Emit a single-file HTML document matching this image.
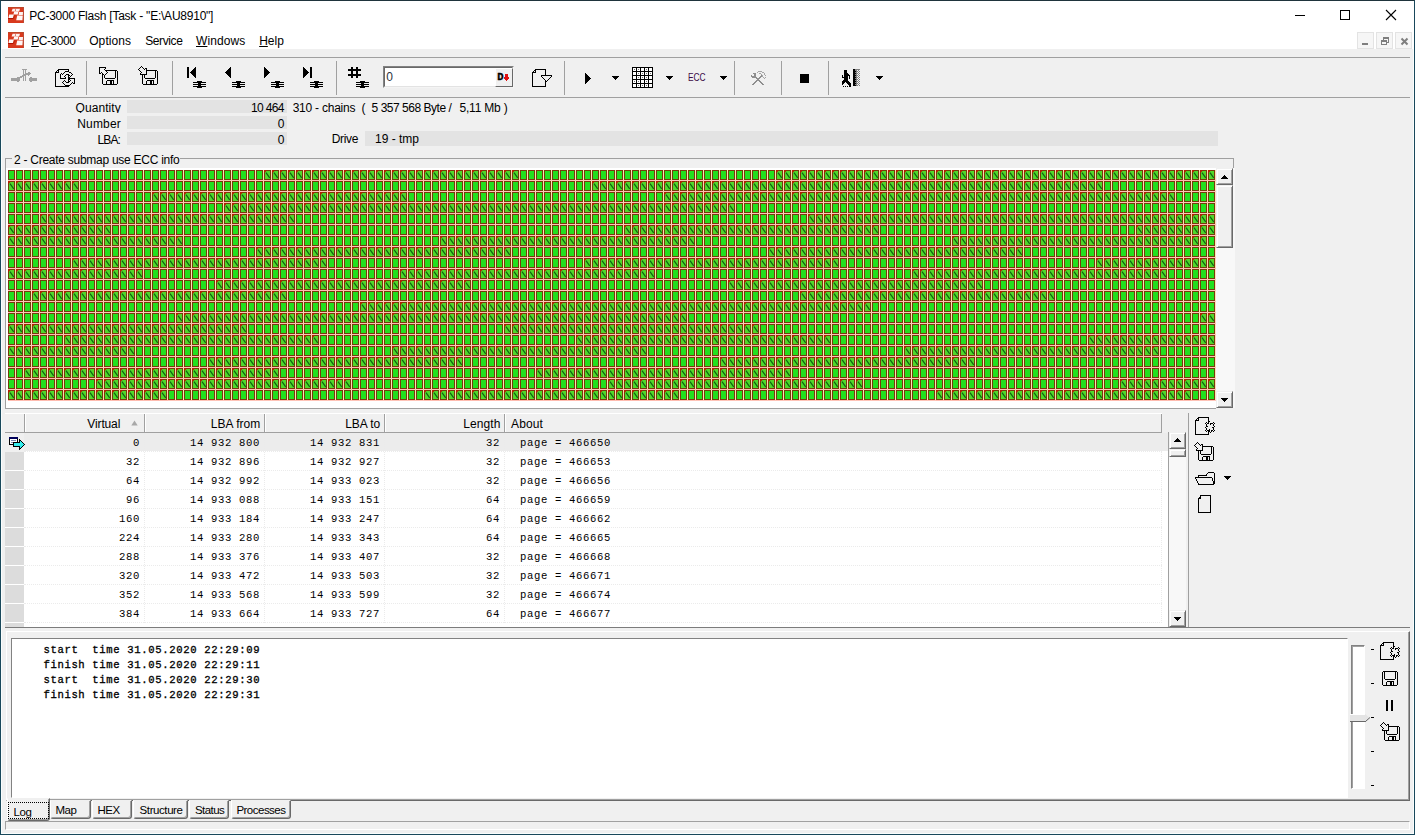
<!DOCTYPE html>
<html lang="en"><head><meta charset="utf-8"><title>PC-3000 Flash</title>
<style>
html,body{margin:0;padding:0;}
body{width:1415px;height:835px;overflow:hidden;background:#f0f0f0;font-family:"Liberation Sans",sans-serif;font-size:12px;color:#000;}
#win{position:relative;width:1415px;height:835px;overflow:hidden;background:#f0f0f0;}
.abs{position:absolute;}
.t{position:absolute;white-space:pre;line-height:14px;height:14px;}
.mono{font-family:"Liberation Mono",monospace;font-size:11.667px;}
svg{position:absolute;overflow:visible;}
.px{shape-rendering:crispEdges;}
</style></head>
<body>
<div id="win">
<!-- titlebar -->
<div class="abs" style="left:0;top:0;width:1415px;height:49px;background:#fff;"></div>
<svg width="0" height="0" style="left:0;top:0;">
  <defs>
    <g id="appicon" shape-rendering="geometricPrecision">
      <rect x="0" y="0" width="16" height="16" fill="#d8391d"/>
      <rect x="0" y="0" width="16" height="0.8" fill="#b8492a"/>
      <rect x="15.2" y="0" width="0.8" height="16" fill="#b5503f"/>
      <polygon points="4.6,1.7 12,1.7 11.2,4.4 3.6,4.4" fill="#fff" opacity=".93"/>
      <polygon points="6.2,4.6 10.4,4.6 9.8,7.6 5.4,7.6" fill="#fff" opacity=".96"/>
      <polygon points="1.2,7.4 5.8,7.4 5,11 0.5,11" fill="#fff" opacity=".96"/>
      <polygon points="11,5 15,5 14.8,7.9 10.6,7.9" fill="#fff" opacity=".93"/>
      <polygon points="9.2,8.4 14.8,8.4 14.4,13.2 8.2,13.2" fill="#fff" opacity=".96"/>
      <polygon points="7.1,2.2 7.9,2.2 7.5,3.9 6.9,3.9" fill="#c8442c"/>
      <polygon points="0,11.1 5.6,11.1 5.4,12 0,12" fill="#b01200"/>
      <polygon points="4.8,11 6.6,8 7.8,8.6 6,11.6" fill="#c42a10"/>
    </g>
    <g id="dd"><path d="M0 0h7v1h-7zM1 1h5v1h-5zM2 2h3v1h-3zM3 3h1v1h-1z" fill="#000"/></g>
    <g id="chain" fill="#000"><path d="M0 1h13v1h-13zM0 3h13v1h-13zM0 5h13v1h-13zM5 0h3v7h-3zM4 0h5v1h-5zM4 6h5v1h-5z"/></g>
  </defs>
</svg>
<svg style="left:8px;top:7px" width="16" height="16"><use href="#appicon"/></svg>
<svg style="left:8px;top:32px" width="16" height="16"><use href="#appicon"/></svg>
<div class="t" style="letter-spacing:-0.233px;left:29.20px;top:8.84px;">PC-3000 Flash [Task - "E:\AU8910"]</div>
<svg class="px" style="left:0;top:0" width="1415" height="50">
  <rect x="1295" y="15" width="10" height="1" fill="#000"/>
  <rect x="1340.5" y="10.5" width="9" height="9" fill="none" stroke="#000" stroke-width="1"/>
  <path d="M1386 10 L1396 20 M1396 10 L1386 20" stroke="#000" stroke-width="1.1" fill="none" shape-rendering="auto"/>
  <g fill="#f6f6f6" stroke="#e3e3e3" stroke-width="1">
    <rect x="1357.5" y="32.5" width="16" height="16"/>
    <rect x="1376.5" y="32.5" width="16" height="16"/>
    <rect x="1395.5" y="32.5" width="16" height="16"/>
  </g>
  <rect x="1362" y="43" width="6" height="2" fill="#7f7f7f"/>
  <g fill="#7f7f7f">
    <path d="M1383 37h6v2h-6zM1388 39h1v4h-1zM1386 42h3v1h-3zM1383 39h1v1h-1z"/>
    <path d="M1381 40h6v2h-6zM1381 42h1v3h-1zM1386 42h1v3h-1zM1381 44h6v1h-6z"/>
  </g>
  <path d="M1401.5 38.5 L1407.5 44.5 M1407.5 38.5 L1401.5 44.5" stroke="#7f7f7f" stroke-width="2" fill="none" shape-rendering="auto"/>
</svg>
<div class="t" style="letter-spacing:-0.437px;left:31.20px;top:33.84px;"><u>P</u>C-3000</div>
<div class="t" style="letter-spacing:0.092px;left:89.20px;top:33.84px;">Options</div>
<div class="t" style="letter-spacing:-0.388px;left:145.20px;top:33.84px;">Service</div>
<div class="t" style="letter-spacing:0.074px;left:196.00px;top:33.84px;"><u>W</u>indows</div>
<div class="t" style="letter-spacing:-0.020px;left:259.20px;top:33.84px;"><u>H</u>elp</div>
<!-- toolbar -->
<div class="abs" style="left:5px;top:57px;width:1405px;height:1px;background:#a0a0a0;"></div>
<div class="abs" style="left:5px;top:97px;width:1405px;height:1px;background:#a0a0a0;"></div>
<div class="abs" style="left:86px;top:61px;width:1px;height:34px;background:#a0a0a0;"></div>
<div class="abs" style="left:172px;top:61px;width:1px;height:34px;background:#a0a0a0;"></div>
<div class="abs" style="left:336px;top:61px;width:1px;height:34px;background:#a0a0a0;"></div>
<div class="abs" style="left:564px;top:61px;width:1px;height:34px;background:#a0a0a0;"></div>
<div class="abs" style="left:734px;top:61px;width:1px;height:34px;background:#a0a0a0;"></div>
<div class="abs" style="left:781px;top:61px;width:1px;height:34px;background:#a0a0a0;"></div>
<div class="abs" style="left:828px;top:61px;width:1px;height:34px;background:#a0a0a0;"></div>
<svg class="px" style="left:0;top:50px" width="1415" height="50" viewBox="0 50 1415 50"><path fill="#a0a0a0" d="M22 69h5v1h-5zM23 70h1v1h-1zM25 70h1v1h-1zM23 71h1v1h-1zM25 71h1v1h-1zM23 72h1v1h-1zM25 72h1v1h-1zM28 72h2v1h-2zM23 73h1v1h-1zM25 73h6v1h-6zM23 74h7v1h-7zM22 75h4v1h-4zM28 75h1v1h-1zM20 76h4v1h-4zM25 76h1v1h-1zM17 77h5v1h-5zM23 77h1v1h-1zM25 77h1v1h-1zM30 77h2v1h-2zM11 78h9v1h-9zM23 78h1v1h-1zM25 78h1v1h-1zM29 78h8v1h-8zM11 79h9v1h-9zM23 79h1v1h-1zM25 79h1v1h-1zM29 79h8v1h-8zM11 80h9v1h-9zM23 80h1v1h-1zM25 80h1v1h-1zM29 80h8v1h-8zM17 81h2v1h-2zM30 81h2v1h-2z"/><path fill="#000" d="M58 69h11v1h-11zM57 70h2v1h-2zM68 70h1v1h-1zM56 71h1v1h-1zM58 71h1v1h-1zM65 71h4v1h-4zM55 72h4v1h-4zM64 72h1v1h-1zM69 72h2v1h-2zM55 73h1v1h-1zM61 73h1v1h-1zM63 73h1v1h-1zM71 73h1v1h-1zM55 74h1v1h-1zM60 74h1v1h-1zM62 74h1v1h-1zM66 74h3v1h-3zM72 74h1v1h-1zM55 75h1v1h-1zM60 75h1v1h-1zM65 75h1v1h-1zM68 75h2v1h-2zM71 75h1v1h-1zM55 76h1v1h-1zM60 76h1v1h-1zM64 76h1v1h-1zM68 76h1v1h-1zM70 76h1v1h-1zM55 77h1v1h-1zM60 77h1v1h-1zM65 77h1v1h-1zM68 77h2v1h-2zM55 78h1v1h-1zM60 78h6v1h-6zM68 78h7v1h-7zM55 79h1v1h-1zM68 79h2v1h-2zM74 79h1v1h-1zM55 80h1v1h-1zM64 80h1v1h-1zM68 80h1v1h-1zM70 80h1v1h-1zM74 80h1v1h-1zM55 81h1v1h-1zM63 81h1v1h-1zM65 81h1v1h-1zM68 81h2v1h-2zM74 81h1v1h-1zM55 82h1v1h-1zM62 82h1v1h-1zM66 82h3v1h-3zM72 82h1v1h-1zM74 82h1v1h-1zM55 83h1v1h-1zM63 83h1v1h-1zM71 83h1v1h-1zM73 83h2v1h-2zM55 84h1v1h-1zM64 84h1v1h-1zM70 84h1v1h-1zM55 85h1v1h-1zM65 85h5v1h-5zM55 86h14v1h-14z"/><path fill="#000" d="M99 67h7v1h-7zM99 68h1v1h-1zM105 68h1v1h-1zM99 69h1v1h-1zM104 69h1v1h-1zM99 70h1v1h-1zM105 70h12v1h-12zM99 71h1v1h-1zM106 71h1v1h-1zM115 71h1v1h-1zM117 71h1v1h-1zM99 72h1v1h-1zM101 72h1v1h-1zM107 72h1v1h-1zM115 72h1v1h-1zM117 72h1v1h-1zM99 73h2v1h-2zM102 73h1v1h-1zM106 73h1v1h-1zM115 73h1v1h-1zM117 73h1v1h-1zM102 74h2v1h-2zM105 74h1v1h-1zM115 74h1v1h-1zM117 74h1v1h-1zM102 75h1v1h-1zM104 75h1v1h-1zM115 75h1v1h-1zM117 75h1v1h-1zM102 76h1v1h-1zM104 76h1v1h-1zM115 76h1v1h-1zM117 76h1v1h-1zM102 77h1v1h-1zM104 77h1v1h-1zM115 77h1v1h-1zM117 77h1v1h-1zM102 78h1v1h-1zM105 78h10v1h-10zM117 78h1v1h-1zM102 79h1v1h-1zM117 79h1v1h-1zM102 80h1v1h-1zM107 80h7v1h-7zM117 80h1v1h-1zM102 81h1v1h-1zM106 81h1v1h-1zM110 81h2v1h-2zM113 81h1v1h-1zM117 81h1v1h-1zM102 82h1v1h-1zM106 82h1v1h-1zM110 82h2v1h-2zM113 82h1v1h-1zM117 82h1v1h-1zM102 83h1v1h-1zM106 83h1v1h-1zM110 83h2v1h-2zM113 83h1v1h-1zM117 83h1v1h-1zM103 84h14v1h-14z"/><path fill="#000" d="M141 66h1v1h-1zM140 67h1v1h-1zM142 67h1v1h-1zM139 68h1v1h-1zM143 68h1v1h-1zM145 68h2v1h-2zM138 69h1v1h-1zM144 69h1v1h-1zM146 69h1v1h-1zM139 70h1v1h-1zM146 70h11v1h-11zM140 71h1v1h-1zM146 71h1v1h-1zM155 71h1v1h-1zM157 71h1v1h-1zM141 72h1v1h-1zM146 72h1v1h-1zM155 72h1v1h-1zM157 72h1v1h-1zM140 73h1v1h-1zM146 73h1v1h-1zM155 73h1v1h-1zM157 73h1v1h-1zM140 74h7v1h-7zM155 74h1v1h-1zM157 74h1v1h-1zM142 75h1v1h-1zM144 75h1v1h-1zM155 75h1v1h-1zM157 75h1v1h-1zM142 76h1v1h-1zM144 76h1v1h-1zM155 76h1v1h-1zM157 76h1v1h-1zM142 77h1v1h-1zM144 77h1v1h-1zM155 77h1v1h-1zM157 77h1v1h-1zM142 78h1v1h-1zM145 78h10v1h-10zM157 78h1v1h-1zM142 79h1v1h-1zM157 79h1v1h-1zM142 80h1v1h-1zM147 80h7v1h-7zM157 80h1v1h-1zM142 81h1v1h-1zM146 81h1v1h-1zM150 81h2v1h-2zM153 81h1v1h-1zM157 81h1v1h-1zM142 82h1v1h-1zM146 82h1v1h-1zM150 82h2v1h-2zM153 82h1v1h-1zM157 82h1v1h-1zM142 83h1v1h-1zM146 83h1v1h-1zM150 83h2v1h-2zM153 83h1v1h-1zM157 83h1v1h-1zM143 84h14v1h-14z"/><rect x="187" y="67" width="2" height="11" fill="#000"/><path fill="#000" d="M195 67h1v1h-1zM194 68h2v1h-2zM193 69h3v1h-3zM192 70h4v1h-4zM191 71h5v1h-5zM190 72h6v1h-6zM191 73h5v1h-5zM192 74h4v1h-4zM193 75h3v1h-3zM194 76h2v1h-2zM195 77h1v1h-1z"/><use href="#chain" x="193" y="81"/><path fill="#000" d="M230 67h1v1h-1zM229 68h2v1h-2zM228 69h3v1h-3zM227 70h4v1h-4zM226 71h5v1h-5zM225 72h6v1h-6zM226 73h5v1h-5zM227 74h4v1h-4zM228 75h3v1h-3zM229 76h2v1h-2zM230 77h1v1h-1z"/><use href="#chain" x="232" y="81"/><path fill="#000" d="M264 67h1v1h-1zM264 68h2v1h-2zM264 69h3v1h-3zM264 70h4v1h-4zM264 71h5v1h-5zM264 72h6v1h-6zM264 73h5v1h-5zM264 74h4v1h-4zM264 75h3v1h-3zM264 76h2v1h-2zM264 77h1v1h-1z"/><use href="#chain" x="271" y="81"/><path fill="#000" d="M303 67h1v1h-1zM303 68h2v1h-2zM303 69h3v1h-3zM303 70h4v1h-4zM303 71h5v1h-5zM303 72h6v1h-6zM303 73h5v1h-5zM303 74h4v1h-4zM303 75h3v1h-3zM303 76h2v1h-2zM303 77h1v1h-1z"/><rect x="310" y="67" width="2" height="11" fill="#000"/><use href="#chain" x="310" y="81"/><path fill="#000" d="M348 69h13v2h-13zM348 74h13v2h-13zM351 67h2v11h-2zM356 67h2v11h-2z"/><use href="#chain" x="356" y="81"/><path fill="#000" d="M535 69h11v1h-11zM534 70h2v1h-2zM545 70h1v1h-1zM533 71h1v1h-1zM535 71h1v1h-1zM545 71h1v1h-1zM532 72h4v1h-4zM545 72h1v1h-1zM532 73h1v1h-1zM545 73h1v1h-1zM532 74h1v1h-1zM545 74h1v1h-1zM532 75h1v1h-1zM541 75h11v1h-11zM532 76h1v1h-1zM541 76h1v1h-1zM551 76h1v1h-1zM532 77h1v1h-1zM542 77h1v1h-1zM550 77h1v1h-1zM532 78h1v1h-1zM543 78h1v1h-1zM549 78h1v1h-1zM532 79h1v1h-1zM544 79h1v1h-1zM548 79h1v1h-1zM532 80h1v1h-1zM545 80h1v1h-1zM547 80h1v1h-1zM532 81h1v1h-1zM545 81h2v1h-2zM532 82h1v1h-1zM545 82h1v1h-1zM532 83h1v1h-1zM545 83h1v1h-1zM532 84h1v1h-1zM545 84h1v1h-1zM532 85h1v1h-1zM545 85h1v1h-1zM532 86h14v1h-14z"/><path fill="#000" d="M585 73h1v1h-1zM585 74h2v1h-2zM585 75h3v1h-3zM585 76h4v1h-4zM585 77h5v1h-5zM585 78h6v1h-6zM585 79h5v1h-5zM585 80h4v1h-4zM585 81h3v1h-3zM585 82h2v1h-2zM585 83h1v1h-1z"/><use href="#dd" x="612" y="76"/><use href="#dd" x="666" y="76"/><use href="#dd" x="720" y="76"/><use href="#dd" x="876" y="76"/><rect x="632" y="67" width="21" height="21" fill="#000"/><path fill="#fff" d="M633 68h3v3h-3zM637 68h3v3h-3zM641 68h3v3h-3zM645 68h3v3h-3zM649 68h3v3h-3zM633 72h3v3h-3zM637 72h3v3h-3zM641 72h3v3h-3zM645 72h3v3h-3zM649 72h3v3h-3zM633 76h3v3h-3zM637 76h3v3h-3zM641 76h3v3h-3zM645 76h3v3h-3zM649 76h3v3h-3zM633 80h3v3h-3zM637 80h3v3h-3zM641 80h3v3h-3zM645 80h3v3h-3zM649 80h3v3h-3zM633 84h3v3h-3zM637 84h3v3h-3zM641 84h3v3h-3zM645 84h3v3h-3zM649 84h3v3h-3z"/><path fill="#777" d="M634 69h1v1h-1zM638 69h1v1h-1zM646 69h1v1h-1zM638 73h1v1h-1zM642 73h1v1h-1zM646 73h1v1h-1zM650 73h1v1h-1zM638 77h1v1h-1zM642 77h1v1h-1zM646 77h1v1h-1zM634 81h1v1h-1zM638 81h1v1h-1zM646 81h1v1h-1zM638 85h1v1h-1zM642 85h1v1h-1zM646 85h1v1h-1z"/><rect x="800" y="74" width="9" height="9" fill="#000"/><path fill="#a6a6a6" d="M758 71h4v1h-4zM757 72h1v1h-1zM762 72h2v1h-2zM759 73h2v1h-2zM764 73h1v1h-1zM761 74h1v1h-1zM764 74h1v1h-1zM762 75h1v1h-1zM765 75h1v1h-1zM762 76h1v1h-1zM763 77h1v1h-1zM765 77h1v1h-1zM764 78h1v1h-1z"/><path fill="#8e8e8e" d="M753 73h3v1h-3zM754 74h2v1h-2zM751 75h1v1h-1zM754 75h2v1h-2zM761 75h1v1h-1zM751 76h5v1h-5zM760 76h2v1h-2zM752 77h5v1h-5zM759 77h2v1h-2zM756 78h4v1h-4zM757 79h2v1h-2zM756 80h4v1h-4zM755 81h2v1h-2zM759 81h2v1h-2zM754 82h2v1h-2zM760 82h2v1h-2zM753 83h2v1h-2zM761 83h2v1h-2zM752 84h2v1h-2zM762 84h2v1h-2z"/><path fill="#000" d="M844 70h3v1h-3zM844 71h3v1h-3zM844 72h3v1h-3zM844 73h4v1h-4zM844 74h5v1h-5zM842 75h1v1h-1zM844 75h6v1h-6zM842 76h1v1h-1zM844 76h4v1h-4zM849 76h1v1h-1zM842 77h6v1h-6zM849 77h1v1h-1zM844 78h4v1h-4zM849 78h1v1h-1zM844 79h4v1h-4zM843 80h5v1h-5zM842 81h7v1h-7zM842 82h3v1h-3zM846 82h4v1h-4zM842 83h2v1h-2zM847 83h4v1h-4zM842 84h1v1h-1zM848 84h3v1h-3zM849 85h2v1h-2zM843 86h1v1h-1zM845 86h1v1h-1zM847 86h1v1h-1zM849 86h2v1h-2z"/><path fill="#000" d="M853 69h2v1h-2zM853 70h2v1h-2zM853 71h3v1h-3zM853 72h2v1h-2zM853 73h3v1h-3zM853 74h2v1h-2zM853 75h3v1h-3zM853 76h2v1h-2zM853 77h3v1h-3zM853 78h2v1h-2zM853 79h3v1h-3zM853 80h2v1h-2zM853 81h3v1h-3zM853 82h2v1h-2zM853 83h3v1h-3zM853 84h2v1h-2zM853 85h3v1h-3z"/><path fill="#808080" d="M855 69h5v1h-5zM855 70h2v1h-2zM858 70h1v1h-1zM856 71h2v1h-2zM859 71h1v1h-1zM855 72h2v1h-2zM858 72h1v1h-1zM856 73h2v1h-2zM859 73h1v1h-1zM855 74h2v1h-2zM858 74h1v1h-1zM856 75h2v1h-2zM859 75h1v1h-1zM855 76h2v1h-2zM858 76h1v1h-1zM856 77h2v1h-2zM859 77h1v1h-1zM855 78h2v1h-2zM858 78h1v1h-1zM856 79h2v1h-2zM859 79h1v1h-1zM855 80h2v1h-2zM858 80h1v1h-1zM856 81h2v1h-2zM859 81h1v1h-1zM855 82h2v1h-2zM858 82h1v1h-1zM856 83h2v1h-2zM859 83h1v1h-1zM855 84h2v1h-2zM858 84h1v1h-1zM856 85h2v1h-2zM859 85h1v1h-1z"/><path fill="#f4f4f4" d="M857 70h1v1h-1zM859 70h1v1h-1zM858 71h1v1h-1zM857 72h1v1h-1zM859 72h1v1h-1zM858 73h1v1h-1zM857 74h1v1h-1zM859 74h1v1h-1zM858 75h1v1h-1zM857 76h1v1h-1zM859 76h1v1h-1zM858 77h1v1h-1zM857 78h1v1h-1zM859 78h1v1h-1zM858 79h1v1h-1zM857 80h1v1h-1zM859 80h1v1h-1zM858 81h1v1h-1zM857 82h1v1h-1zM859 82h1v1h-1zM858 83h1v1h-1zM857 84h1v1h-1zM859 84h1v1h-1zM858 85h1v1h-1z"/></svg>
<div class="abs" style="left:383px;top:66px;width:131px;height:22px;background:#fff;box-sizing:border-box;border:1px solid;border-color:#828282 #f4f4f4 #f4f4f4 #828282;"></div>
<div class="abs" style="left:384px;top:67px;width:129px;height:20px;box-sizing:border-box;border:1px solid;border-color:#696969 #e3e3e3 #e3e3e3 #696969;"></div>
<div class="t" style="left:386.20px;top:69.84px;color:#2b3440;">0</div>

<div class="abs" style="left:495px;top:68px;width:18px;height:19px;background:#f0f0f0;box-sizing:border-box;border:1px solid;border-color:#fff #696969 #696969 #fff;"></div>
<svg class="px" style="left:0;top:50px" width="1415" height="50" viewBox="0 50 1415 50"><path fill="#e01010" d="M505 74h3v1h-3zM505 75h3v1h-3zM505 76h3v1h-3zM504 77h5v1h-5zM504 78h5v1h-5zM505 79h3v1h-3zM506 80h1v1h-1z"/></svg>
<div class="t mono" style="left:497.3px;top:70.2px;font-size:10.5px;font-weight:bold;-webkit-text-stroke:0.35px #000;">D</div>
<div class="t" style="left:687.6px;top:69.6px;font-size:11px;color:#3c0a46;transform:scaleX(0.76);transform-origin:0 0;">ECC</div>
<!-- info -->
<div class="abs" style="left:127px;top:100px;width:160px;height:13px;background:#e3e3e3;overflow:hidden;"><div class="t" style="right:3.25px;top:0.84px;letter-spacing:-0.651px;">10 464</div></div>
<div class="abs" style="left:40px;top:100px;width:82px;height:13px;overflow:hidden;"><div class="t" style="right:1.11px;top:0.84px;letter-spacing:0.089px;">Quantity</div></div>
<div class="abs" style="left:127px;top:116px;width:160px;height:13px;background:#e3e3e3;overflow:hidden;"><div class="t" style="right:2.60px;top:0.84px;">0</div></div>
<div class="abs" style="left:40px;top:116px;width:82px;height:13px;overflow:hidden;"><div class="t" style="right:1.01px;top:0.84px;letter-spacing:0.187px;">Number</div></div>
<div class="abs" style="left:127px;top:132px;width:160px;height:13px;background:#e3e3e3;overflow:hidden;"><div class="t" style="right:2.60px;top:0.84px;">0</div></div>
<div class="abs" style="left:40px;top:132px;width:82px;height:13px;overflow:hidden;"><div class="t" style="right:2.13px;top:0.84px;letter-spacing:-0.929px;">LBA:</div></div>
<div class="t" style="letter-spacing:-0.239px;left:292.70px;top:100.84px;">310 - chains</div>

<div class="t" style="left:361.50px;top:100.84px;">(</div>

<div class="t" style="letter-spacing:-0.475px;left:371.60px;top:100.84px;">5 357 568 Byte /</div>

<div class="t" style="letter-spacing:-0.178px;left:459.40px;top:100.84px;">5,11 Mb )</div>

<div class="t" style="letter-spacing:-0.300px;left:331.70px;top:131.84px;">Drive</div>

<div class="abs" style="left:365px;top:131px;width:853px;height:15px;background:#e3e3e3;"></div>
<div class="t" style="letter-spacing:-0.002px;left:375.00px;top:131.84px;">19 - tmp</div>

<!-- map -->
<div class="abs" style="left:5px;top:158px;width:1229px;height:251px;box-sizing:border-box;border:1px solid #a0a0a0;"></div>
<div class="abs" style="left:12px;top:154px;width:168px;height:12px;background:#f0f0f0;"></div>
<div class="t" style="letter-spacing:-0.264px;left:14.00px;top:152.84px;">2 - Create submap use ECC info</div>

<div class="abs" style="left:6px;top:168px;width:1210px;height:240px;background:#fff;"></div>
<svg style="left:8px;top:170px" width="1208" height="231" viewBox="0 0 1208 231"><defs><pattern id="pc" width="8" height="11" patternUnits="userSpaceOnUse"><rect width="8" height="11" fill="#ffc4b8"/><rect x="7" width="1" height="10" fill="#ffe2b6"/><rect width="7" height="10" fill="#743c0a"/><rect x="1" y="1" width="5" height="8" fill="#22e01e"/></pattern><pattern id="pn" width="8" height="11" patternUnits="userSpaceOnUse"><rect width="8" height="11" fill="#ffbcb0"/><rect x="7" width="1" height="10" fill="#ffd8b0"/><rect width="7" height="10" fill="#743c0a"/><rect x="1" y="1" width="5" height="8" fill="#50d82a"/><path d="M0 0h2.4v1L1 2.6H0z" fill="#b02000"/><path d="M2 2.6L5.7 7.9" stroke="#0c6410" stroke-width="1.2" fill="none"/></pattern></defs><rect width="1208" height="231" fill="url(#pc)"/><path fill="url(#pn)" d="M256 0h256v11h-256zM768 0h440v11h-440zM0 11h72v11h-72zM584 11h512v11h-512zM144 22h256v11h-256zM656 22h512v11h-512zM216 33h512v11h-512zM32 44h256v11h-256zM800 44h408v11h-408zM0 55h104v11h-104zM616 55h256v11h-256zM1128 55h80v11h-80zM0 66h176v11h-176zM432 66h256v11h-256zM944 66h256v11h-256zM248 77h256v11h-256zM760 77h256v11h-256zM64 88h256v11h-256zM576 88h256v11h-256zM1088 88h120v11h-120zM0 99h136v11h-136zM392 99h256v11h-256zM904 99h256v11h-256zM208 110h256v11h-256zM720 110h256v11h-256zM24 121h256v11h-256zM792 121h256v11h-256zM352 132h512v11h-512zM168 143h512v11h-512zM1192 143h16v11h-16zM0 154h240v11h-240zM496 154h256v11h-256zM56 165h256v11h-256zM568 165h256v11h-256zM1080 165h128v11h-128zM0 176h128v11h-128zM384 176h256v11h-256zM896 176h256v11h-256zM200 187h256v11h-256zM712 187h256v11h-256zM16 198h256v11h-256zM528 198h256v11h-256zM88 209h256v11h-256zM600 209h256v11h-256zM1112 209h96v11h-96zM0 220h160v11h-160zM416 220h256v11h-256zM928 220h256v11h-256z"/></svg>
<div class="abs" style="left:1216px;top:168px;width:19px;height:240px;background:#f8f8f8;"></div>
<div class="abs" style="left:1216px;top:408px;width:19px;height:1px;background:#f0f0f0;"></div>
<div class="abs" style="left:1216px;top:168px;width:17px;height:17px;box-sizing:border-box;background:#f0f0f0;border:1px solid;border-color:#f0f0f0 #696969 #696969 #f0f0f0;box-shadow:inset 1px 1px 0 #fff, inset -1px -1px 0 #a0a0a0;"></div>
<div class="abs" style="left:1216px;top:185px;width:17px;height:63px;box-sizing:border-box;background:#f0f0f0;border:1px solid;border-color:#f0f0f0 #696969 #696969 #f0f0f0;box-shadow:inset 1px 1px 0 #fff, inset -1px -1px 0 #a0a0a0;"></div>
<div class="abs" style="left:1216px;top:391px;width:17px;height:17px;box-sizing:border-box;background:#f0f0f0;border:1px solid;border-color:#f0f0f0 #696969 #696969 #f0f0f0;box-shadow:inset 1px 1px 0 #fff, inset -1px -1px 0 #a0a0a0;"></div>
<svg class="px" style="left:0;top:0" width="1415" height="835"><path fill="#000" d="M1224 175h1v1h-1zM1223 176h3v1h-3zM1222 177h5v1h-5zM1221 178h7v1h-7z"/><use href="#dd" x="1221" y="398"/></svg>
<!-- table -->
<div class="abs" style="left:5px;top:413px;width:1157px;height:19px;background:#f0f0f0;border-bottom:1px solid #a0a0a0;"></div>
<div class="abs" style="left:24px;top:414px;width:1px;height:18px;background:#a0a0a0;"></div>
<div class="abs" style="left:25px;top:414px;width:1px;height:18px;background:#fff;"></div>
<div class="abs" style="left:144px;top:414px;width:1px;height:18px;background:#a0a0a0;"></div>
<div class="abs" style="left:145px;top:414px;width:1px;height:18px;background:#fff;"></div>
<div class="abs" style="left:264px;top:414px;width:1px;height:18px;background:#a0a0a0;"></div>
<div class="abs" style="left:265px;top:414px;width:1px;height:18px;background:#fff;"></div>
<div class="abs" style="left:384px;top:414px;width:1px;height:18px;background:#a0a0a0;"></div>
<div class="abs" style="left:385px;top:414px;width:1px;height:18px;background:#fff;"></div>
<div class="abs" style="left:504px;top:414px;width:1px;height:18px;background:#a0a0a0;"></div>
<div class="abs" style="left:505px;top:414px;width:1px;height:18px;background:#fff;"></div>
<div class="abs" style="left:1161px;top:414px;width:1px;height:18px;background:#a0a0a0;"></div>
<div class="abs" style="left:5px;top:413px;width:1157px;height:1px;background:#fff;"></div>
<div class="t" style="letter-spacing:-0.142px;right:1294.84px;top:416.84px;">Virtual</div>

<div class="t" style="letter-spacing:0.018px;right:1154.68px;top:416.84px;">LBA from</div>

<div class="t" style="letter-spacing:-0.060px;right:1034.76px;top:416.84px;">LBA to</div>

<div class="t" style="letter-spacing:0.049px;right:914.65px;top:416.84px;">Length</div>

<div class="t" style="letter-spacing:0.128px;left:511.00px;top:416.84px;">About</div>

<svg style="left:131px;top:420px" width="8" height="6"><path d="M0.3 5.6 L3.5 0.4 L6.7 5.6z" fill="#a8a8a8"/></svg>
<div class="abs" style="left:5px;top:433px;width:1163px;height:194px;background:#fff;"></div>
<div class="abs" style="left:5px;top:433px;width:1163px;height:18px;background:#ececec;"></div>
<div class="abs" style="left:5px;top:433px;width:19px;height:19px;background:#f0f0f0;"></div>
<div class="abs" style="left:5px;top:452px;width:19px;height:18px;background:#dcdcdc;"></div>
<div class="abs" style="left:5px;top:471px;width:19px;height:18px;background:#dcdcdc;"></div>
<div class="abs" style="left:5px;top:490px;width:19px;height:18px;background:#dcdcdc;"></div>
<div class="abs" style="left:5px;top:509px;width:19px;height:18px;background:#dcdcdc;"></div>
<div class="abs" style="left:5px;top:528px;width:19px;height:18px;background:#dcdcdc;"></div>
<div class="abs" style="left:5px;top:547px;width:19px;height:18px;background:#dcdcdc;"></div>
<div class="abs" style="left:5px;top:566px;width:19px;height:18px;background:#dcdcdc;"></div>
<div class="abs" style="left:5px;top:585px;width:19px;height:18px;background:#dcdcdc;"></div>
<div class="abs" style="left:5px;top:604px;width:19px;height:18px;background:#dcdcdc;"></div>
<div class="abs" style="left:5px;top:623px;width:19px;height:4px;background:#dcdcdc;"></div>
<div class="abs" style="left:24px;top:451px;width:1138px;height:0;border-top:1px dotted #ebebeb;"></div>
<div class="abs" style="left:24px;top:470px;width:1138px;height:0;border-top:1px dotted #ebebeb;"></div>
<div class="abs" style="left:24px;top:489px;width:1138px;height:0;border-top:1px dotted #ebebeb;"></div>
<div class="abs" style="left:24px;top:508px;width:1138px;height:0;border-top:1px dotted #ebebeb;"></div>
<div class="abs" style="left:24px;top:527px;width:1138px;height:0;border-top:1px dotted #ebebeb;"></div>
<div class="abs" style="left:24px;top:546px;width:1138px;height:0;border-top:1px dotted #ebebeb;"></div>
<div class="abs" style="left:24px;top:565px;width:1138px;height:0;border-top:1px dotted #ebebeb;"></div>
<div class="abs" style="left:24px;top:584px;width:1138px;height:0;border-top:1px dotted #ebebeb;"></div>
<div class="abs" style="left:24px;top:603px;width:1138px;height:0;border-top:1px dotted #ebebeb;"></div>
<div class="abs" style="left:24px;top:622px;width:1138px;height:0;border-top:1px dotted #ebebeb;"></div>
<div class="abs" style="left:144px;top:433px;width:0;height:190px;border-left:1px dotted #ebebeb;"></div>
<div class="abs" style="left:264px;top:433px;width:0;height:190px;border-left:1px dotted #ebebeb;"></div>
<div class="abs" style="left:384px;top:433px;width:0;height:190px;border-left:1px dotted #ebebeb;"></div>
<div class="abs" style="left:504px;top:433px;width:0;height:190px;border-left:1px dotted #ebebeb;"></div>
<div class="abs" style="left:1161px;top:433px;width:0;height:190px;border-left:1px dotted #ebebeb;"></div>
<div class="t mono" style="letter-spacing:0.639px;right:1274.96px;top:436.18px;font-size:10.6px;">0</div>

<div class="t mono" style="letter-spacing:0.639px;right:1154.96px;top:436.18px;font-size:10.6px;">14 932 800</div>

<div class="t mono" style="letter-spacing:0.639px;right:1034.96px;top:436.18px;font-size:10.6px;">14 932 831</div>

<div class="t mono" style="letter-spacing:0.639px;right:914.96px;top:436.18px;font-size:10.6px;">32</div>

<div class="t mono" style="letter-spacing:0.639px;left:520.00px;top:436.18px;font-size:10.6px;">page = 466650</div>

<div class="t mono" style="letter-spacing:0.639px;right:1274.96px;top:455.18px;font-size:10.6px;">32</div>

<div class="t mono" style="letter-spacing:0.639px;right:1154.96px;top:455.18px;font-size:10.6px;">14 932 896</div>

<div class="t mono" style="letter-spacing:0.639px;right:1034.96px;top:455.18px;font-size:10.6px;">14 932 927</div>

<div class="t mono" style="letter-spacing:0.639px;right:914.96px;top:455.18px;font-size:10.6px;">32</div>

<div class="t mono" style="letter-spacing:0.639px;left:520.00px;top:455.18px;font-size:10.6px;">page = 466653</div>

<div class="t mono" style="letter-spacing:0.639px;right:1274.96px;top:474.18px;font-size:10.6px;">64</div>

<div class="t mono" style="letter-spacing:0.639px;right:1154.96px;top:474.18px;font-size:10.6px;">14 932 992</div>

<div class="t mono" style="letter-spacing:0.639px;right:1034.96px;top:474.18px;font-size:10.6px;">14 933 023</div>

<div class="t mono" style="letter-spacing:0.639px;right:914.96px;top:474.18px;font-size:10.6px;">32</div>

<div class="t mono" style="letter-spacing:0.639px;left:520.00px;top:474.18px;font-size:10.6px;">page = 466656</div>

<div class="t mono" style="letter-spacing:0.639px;right:1274.96px;top:493.18px;font-size:10.6px;">96</div>

<div class="t mono" style="letter-spacing:0.639px;right:1154.96px;top:493.18px;font-size:10.6px;">14 933 088</div>

<div class="t mono" style="letter-spacing:0.639px;right:1034.96px;top:493.18px;font-size:10.6px;">14 933 151</div>

<div class="t mono" style="letter-spacing:0.639px;right:914.96px;top:493.18px;font-size:10.6px;">64</div>

<div class="t mono" style="letter-spacing:0.639px;left:520.00px;top:493.18px;font-size:10.6px;">page = 466659</div>

<div class="t mono" style="letter-spacing:0.639px;right:1274.96px;top:512.18px;font-size:10.6px;">160</div>

<div class="t mono" style="letter-spacing:0.639px;right:1154.96px;top:512.18px;font-size:10.6px;">14 933 184</div>

<div class="t mono" style="letter-spacing:0.639px;right:1034.96px;top:512.18px;font-size:10.6px;">14 933 247</div>

<div class="t mono" style="letter-spacing:0.639px;right:914.96px;top:512.18px;font-size:10.6px;">64</div>

<div class="t mono" style="letter-spacing:0.639px;left:520.00px;top:512.18px;font-size:10.6px;">page = 466662</div>

<div class="t mono" style="letter-spacing:0.639px;right:1274.96px;top:531.18px;font-size:10.6px;">224</div>

<div class="t mono" style="letter-spacing:0.639px;right:1154.96px;top:531.18px;font-size:10.6px;">14 933 280</div>

<div class="t mono" style="letter-spacing:0.639px;right:1034.96px;top:531.18px;font-size:10.6px;">14 933 343</div>

<div class="t mono" style="letter-spacing:0.639px;right:914.96px;top:531.18px;font-size:10.6px;">64</div>

<div class="t mono" style="letter-spacing:0.639px;left:520.00px;top:531.18px;font-size:10.6px;">page = 466665</div>

<div class="t mono" style="letter-spacing:0.639px;right:1274.96px;top:550.18px;font-size:10.6px;">288</div>

<div class="t mono" style="letter-spacing:0.639px;right:1154.96px;top:550.18px;font-size:10.6px;">14 933 376</div>

<div class="t mono" style="letter-spacing:0.639px;right:1034.96px;top:550.18px;font-size:10.6px;">14 933 407</div>

<div class="t mono" style="letter-spacing:0.639px;right:914.96px;top:550.18px;font-size:10.6px;">32</div>

<div class="t mono" style="letter-spacing:0.639px;left:520.00px;top:550.18px;font-size:10.6px;">page = 466668</div>

<div class="t mono" style="letter-spacing:0.639px;right:1274.96px;top:569.18px;font-size:10.6px;">320</div>

<div class="t mono" style="letter-spacing:0.639px;right:1154.96px;top:569.18px;font-size:10.6px;">14 933 472</div>

<div class="t mono" style="letter-spacing:0.639px;right:1034.96px;top:569.18px;font-size:10.6px;">14 933 503</div>

<div class="t mono" style="letter-spacing:0.639px;right:914.96px;top:569.18px;font-size:10.6px;">32</div>

<div class="t mono" style="letter-spacing:0.639px;left:520.00px;top:569.18px;font-size:10.6px;">page = 466671</div>

<div class="t mono" style="letter-spacing:0.639px;right:1274.96px;top:588.18px;font-size:10.6px;">352</div>

<div class="t mono" style="letter-spacing:0.639px;right:1154.96px;top:588.18px;font-size:10.6px;">14 933 568</div>

<div class="t mono" style="letter-spacing:0.639px;right:1034.96px;top:588.18px;font-size:10.6px;">14 933 599</div>

<div class="t mono" style="letter-spacing:0.639px;right:914.96px;top:588.18px;font-size:10.6px;">32</div>

<div class="t mono" style="letter-spacing:0.639px;left:520.00px;top:588.18px;font-size:10.6px;">page = 466674</div>

<div class="t mono" style="letter-spacing:0.639px;right:1274.96px;top:607.18px;font-size:10.6px;">384</div>

<div class="t mono" style="letter-spacing:0.639px;right:1154.96px;top:607.18px;font-size:10.6px;">14 933 664</div>

<div class="t mono" style="letter-spacing:0.639px;right:1034.96px;top:607.18px;font-size:10.6px;">14 933 727</div>

<div class="t mono" style="letter-spacing:0.639px;right:914.96px;top:607.18px;font-size:10.6px;">64</div>

<div class="t mono" style="letter-spacing:0.639px;left:520.00px;top:607.18px;font-size:10.6px;">page = 466677</div>

<div class="abs" style="left:5px;top:627px;width:1405px;height:1px;background:#7c7c7c;"></div>
<div class="abs" style="left:1168px;top:432px;width:1px;height:195px;background:#a0a0a0;"></div>
<div class="abs" style="left:1169px;top:432px;width:17px;height:195px;background:#f8f8f8;"></div>
<div class="abs" style="left:1169px;top:432px;width:17px;height:17px;box-sizing:border-box;background:#f0f0f0;border:1px solid;border-color:#f0f0f0 #696969 #696969 #f0f0f0;box-shadow:inset 1px 1px 0 #fff, inset -1px -1px 0 #a0a0a0;"></div>
<div class="abs" style="left:1169px;top:449px;width:17px;height:8px;box-sizing:border-box;background:#f0f0f0;border:1px solid;border-color:#f0f0f0 #696969 #696969 #f0f0f0;box-shadow:inset 1px 1px 0 #fff, inset -1px -1px 0 #a0a0a0;"></div>
<div class="abs" style="left:1169px;top:610px;width:17px;height:17px;box-sizing:border-box;background:#f0f0f0;border:1px solid;border-color:#f0f0f0 #696969 #696969 #f0f0f0;box-shadow:inset 1px 1px 0 #fff, inset -1px -1px 0 #a0a0a0;"></div>
<svg class="px" style="left:0;top:0" width="1415" height="835"><path fill="#000" d="M1177 438h1v1h-1zM1176 439h3v1h-3zM1175 440h5v1h-5zM1174 441h7v1h-7z"/><use href="#dd" x="1174" y="617"/></svg>
<div class="abs" style="left:1188px;top:413px;width:1px;height:214px;background:#a0a0a0;"></div>
<!-- log -->
<div class="abs" style="left:6px;top:631px;width:1404px;height:170px;box-sizing:border-box;border:1px solid;border-color:#fff #696969 #696969 #fff;box-shadow:inset -1px -1px 0 #a0a0a0;"></div>
<div class="abs" style="left:11px;top:638px;width:1337px;height:160px;box-sizing:border-box;background:#fff;border:1px solid;border-color:#828282 #fff #fff #828282;"></div>
<div class="t mono" style="letter-spacing:0.639px;left:43.40px;top:643.18px;font-size:10.6px;-webkit-text-stroke:0.3px #000;">start  time 31.05.2020 22:29:09</div>

<div class="t mono" style="letter-spacing:0.639px;left:43.40px;top:658.18px;font-size:10.6px;-webkit-text-stroke:0.3px #000;">finish time 31.05.2020 22:29:11</div>

<div class="t mono" style="letter-spacing:0.639px;left:43.40px;top:673.18px;font-size:10.6px;-webkit-text-stroke:0.3px #000;">start  time 31.05.2020 22:29:30</div>

<div class="t mono" style="letter-spacing:0.639px;left:43.40px;top:688.18px;font-size:10.6px;-webkit-text-stroke:0.3px #000;">finish time 31.05.2020 22:29:31</div>

<div class="abs" style="left:1351px;top:645px;width:14px;height:144px;box-sizing:border-box;background:#fff;border:1px solid;border-color:#828282 #fff #fff #828282;box-shadow:inset 1px 1px 0 #a0a0a0;"></div>
<svg class="px" style="left:0;top:0" width="1415" height="835"><path d="M1350 714h15l5 4l-4 4h-16z" fill="#e4e4e4" shape-rendering="auto"/><path d="M1350 721h16v1h-16z" fill="#696969"/><path d="M1366 721l4-3.5" stroke="#696969" stroke-width="1" shape-rendering="auto"/><path d="M1350 714h15v1h-15z" fill="#fff"/><rect x="1371" y="649" width="3" height="1" fill="#000"/><rect x="1371" y="683" width="3" height="1" fill="#000"/><rect x="1371" y="717" width="3" height="1" fill="#000"/><rect x="1371" y="751" width="3" height="1" fill="#000"/><rect x="1371" y="785" width="3" height="1" fill="#000"/><path fill="#000" d="M1383 642h11v1h-11zM1382 643h2v1h-2zM1393 643h1v1h-1zM1381 644h1v1h-1zM1383 644h1v1h-1zM1393 644h1v1h-1zM1380 645h4v1h-4zM1393 645h1v1h-1zM1380 646h1v1h-1zM1393 646h2v1h-2zM1380 647h1v1h-1zM1391 647h1v1h-1zM1393 647h1v1h-1zM1398 647h1v1h-1zM1380 648h1v1h-1zM1390 648h1v1h-1zM1392 648h2v1h-2zM1395 648h3v1h-3zM1399 648h1v1h-1zM1380 649h1v1h-1zM1391 649h1v1h-1zM1395 649h1v1h-1zM1398 649h1v1h-1zM1380 650h1v1h-1zM1391 650h1v1h-1zM1398 650h1v1h-1zM1380 651h1v1h-1zM1391 651h2v1h-2zM1399 651h1v1h-1zM1380 652h1v1h-1zM1390 652h1v1h-1zM1397 652h2v1h-2zM1380 653h1v1h-1zM1391 653h1v1h-1zM1398 653h1v1h-1zM1380 654h1v1h-1zM1391 654h1v1h-1zM1394 654h1v1h-1zM1398 654h1v1h-1zM1380 655h1v1h-1zM1390 655h1v1h-1zM1392 655h3v1h-3zM1396 655h2v1h-2zM1399 655h1v1h-1zM1380 656h1v1h-1zM1391 656h1v1h-1zM1393 656h2v1h-2zM1396 656h1v1h-1zM1398 656h1v1h-1zM1380 657h1v1h-1zM1393 657h1v1h-1zM1395 657h1v1h-1zM1380 658h1v1h-1zM1393 658h1v1h-1zM1380 659h14v1h-14z"/><path fill="#000" d="M1383 671h14v1h-14zM1382 672h1v1h-1zM1384 672h1v1h-1zM1395 672h1v1h-1zM1397 672h1v1h-1zM1382 673h1v1h-1zM1384 673h1v1h-1zM1395 673h1v1h-1zM1397 673h1v1h-1zM1382 674h1v1h-1zM1384 674h1v1h-1zM1395 674h1v1h-1zM1397 674h1v1h-1zM1382 675h1v1h-1zM1384 675h1v1h-1zM1395 675h1v1h-1zM1397 675h1v1h-1zM1382 676h1v1h-1zM1384 676h1v1h-1zM1395 676h1v1h-1zM1397 676h1v1h-1zM1382 677h1v1h-1zM1384 677h1v1h-1zM1395 677h1v1h-1zM1397 677h1v1h-1zM1382 678h1v1h-1zM1384 678h1v1h-1zM1395 678h1v1h-1zM1397 678h1v1h-1zM1382 679h1v1h-1zM1385 679h10v1h-10zM1397 679h1v1h-1zM1382 680h1v1h-1zM1397 680h1v1h-1zM1382 681h1v1h-1zM1387 681h7v1h-7zM1397 681h1v1h-1zM1382 682h1v1h-1zM1386 682h1v1h-1zM1390 682h2v1h-2zM1393 682h1v1h-1zM1397 682h1v1h-1zM1382 683h1v1h-1zM1386 683h1v1h-1zM1390 683h2v1h-2zM1393 683h1v1h-1zM1397 683h1v1h-1zM1382 684h1v1h-1zM1386 684h1v1h-1zM1390 684h2v1h-2zM1393 684h1v1h-1zM1397 684h1v1h-1zM1383 685h14v1h-14z"/><rect x="1386" y="700" width="2" height="11" fill="#000"/><rect x="1391" y="700" width="2" height="11" fill="#000"/><path fill="#000" d="M1383 722h1v1h-1zM1382 723h1v1h-1zM1384 723h1v1h-1zM1381 724h1v1h-1zM1385 724h1v1h-1zM1387 724h2v1h-2zM1380 725h1v1h-1zM1386 725h1v1h-1zM1388 725h1v1h-1zM1381 726h1v1h-1zM1388 726h11v1h-11zM1382 727h1v1h-1zM1388 727h1v1h-1zM1397 727h1v1h-1zM1399 727h1v1h-1zM1383 728h1v1h-1zM1388 728h1v1h-1zM1397 728h1v1h-1zM1399 728h1v1h-1zM1382 729h1v1h-1zM1388 729h1v1h-1zM1397 729h1v1h-1zM1399 729h1v1h-1zM1382 730h7v1h-7zM1397 730h1v1h-1zM1399 730h1v1h-1zM1384 731h1v1h-1zM1386 731h1v1h-1zM1397 731h1v1h-1zM1399 731h1v1h-1zM1384 732h1v1h-1zM1386 732h1v1h-1zM1397 732h1v1h-1zM1399 732h1v1h-1zM1384 733h1v1h-1zM1386 733h1v1h-1zM1397 733h1v1h-1zM1399 733h1v1h-1zM1384 734h1v1h-1zM1387 734h10v1h-10zM1399 734h1v1h-1zM1384 735h1v1h-1zM1399 735h1v1h-1zM1384 736h1v1h-1zM1389 736h7v1h-7zM1399 736h1v1h-1zM1384 737h1v1h-1zM1388 737h1v1h-1zM1392 737h2v1h-2zM1395 737h1v1h-1zM1399 737h1v1h-1zM1384 738h1v1h-1zM1388 738h1v1h-1zM1392 738h2v1h-2zM1395 738h1v1h-1zM1399 738h1v1h-1zM1384 739h1v1h-1zM1388 739h1v1h-1zM1392 739h2v1h-2zM1395 739h1v1h-1zM1399 739h1v1h-1zM1385 740h14v1h-14z"/><path fill="#000" d="M1198 417h11v1h-11zM1197 418h2v1h-2zM1208 418h1v1h-1zM1196 419h1v1h-1zM1198 419h1v1h-1zM1208 419h1v1h-1zM1195 420h4v1h-4zM1208 420h1v1h-1zM1195 421h1v1h-1zM1208 421h2v1h-2zM1195 422h1v1h-1zM1206 422h1v1h-1zM1208 422h1v1h-1zM1213 422h1v1h-1zM1195 423h1v1h-1zM1205 423h1v1h-1zM1207 423h2v1h-2zM1210 423h3v1h-3zM1214 423h1v1h-1zM1195 424h1v1h-1zM1206 424h1v1h-1zM1210 424h1v1h-1zM1213 424h1v1h-1zM1195 425h1v1h-1zM1206 425h1v1h-1zM1213 425h1v1h-1zM1195 426h1v1h-1zM1206 426h2v1h-2zM1214 426h1v1h-1zM1195 427h1v1h-1zM1205 427h1v1h-1zM1212 427h2v1h-2zM1195 428h1v1h-1zM1206 428h1v1h-1zM1213 428h1v1h-1zM1195 429h1v1h-1zM1206 429h1v1h-1zM1209 429h1v1h-1zM1213 429h1v1h-1zM1195 430h1v1h-1zM1205 430h1v1h-1zM1207 430h3v1h-3zM1211 430h2v1h-2zM1214 430h1v1h-1zM1195 431h1v1h-1zM1206 431h1v1h-1zM1208 431h2v1h-2zM1211 431h1v1h-1zM1213 431h1v1h-1zM1195 432h1v1h-1zM1208 432h1v1h-1zM1210 432h1v1h-1zM1195 433h1v1h-1zM1208 433h1v1h-1zM1195 434h14v1h-14z"/><path fill="#000" d="M1197 442h1v1h-1zM1196 443h1v1h-1zM1198 443h1v1h-1zM1195 444h1v1h-1zM1199 444h1v1h-1zM1201 444h2v1h-2zM1194 445h1v1h-1zM1200 445h1v1h-1zM1202 445h1v1h-1zM1195 446h1v1h-1zM1202 446h11v1h-11zM1196 447h1v1h-1zM1202 447h1v1h-1zM1211 447h1v1h-1zM1213 447h1v1h-1zM1197 448h1v1h-1zM1202 448h1v1h-1zM1211 448h1v1h-1zM1213 448h1v1h-1zM1196 449h1v1h-1zM1202 449h1v1h-1zM1211 449h1v1h-1zM1213 449h1v1h-1zM1196 450h7v1h-7zM1211 450h1v1h-1zM1213 450h1v1h-1zM1198 451h1v1h-1zM1200 451h1v1h-1zM1211 451h1v1h-1zM1213 451h1v1h-1zM1198 452h1v1h-1zM1200 452h1v1h-1zM1211 452h1v1h-1zM1213 452h1v1h-1zM1198 453h1v1h-1zM1200 453h1v1h-1zM1211 453h1v1h-1zM1213 453h1v1h-1zM1198 454h1v1h-1zM1201 454h10v1h-10zM1213 454h1v1h-1zM1198 455h1v1h-1zM1213 455h1v1h-1zM1198 456h1v1h-1zM1203 456h7v1h-7zM1213 456h1v1h-1zM1198 457h1v1h-1zM1202 457h1v1h-1zM1206 457h2v1h-2zM1209 457h1v1h-1zM1213 457h1v1h-1zM1198 458h1v1h-1zM1202 458h1v1h-1zM1206 458h2v1h-2zM1209 458h1v1h-1zM1213 458h1v1h-1zM1198 459h1v1h-1zM1202 459h1v1h-1zM1206 459h2v1h-2zM1209 459h1v1h-1zM1213 459h1v1h-1zM1199 460h14v1h-14z"/><path fill="#000" d="M1208 472h6v1h-6zM1207 473h1v1h-1zM1214 473h1v1h-1zM1206 474h1v1h-1zM1214 474h1v1h-1zM1198 475h9v1h-9zM1214 475h1v1h-1zM1198 476h1v1h-1zM1214 476h1v1h-1zM1195 477h17v1h-17zM1214 477h1v1h-1zM1195 478h1v1h-1zM1212 478h1v1h-1zM1214 478h1v1h-1zM1196 479h1v1h-1zM1212 479h1v1h-1zM1214 479h1v1h-1zM1196 480h1v1h-1zM1212 480h1v1h-1zM1214 480h1v1h-1zM1197 481h1v1h-1zM1213 481h2v1h-2zM1197 482h1v1h-1zM1213 482h2v1h-2zM1198 483h1v1h-1zM1213 483h2v1h-2zM1198 484h16v1h-16z"/><use href="#dd" x="1224" y="476"/><path fill="#000" d="M1200 495h11v1h-11zM1200 496h1v1h-1zM1210 496h1v1h-1zM1199 497h2v1h-2zM1210 497h1v1h-1zM1198 498h3v1h-3zM1210 498h1v1h-1zM1198 499h1v1h-1zM1210 499h1v1h-1zM1198 500h1v1h-1zM1210 500h1v1h-1zM1198 501h1v1h-1zM1210 501h1v1h-1zM1198 502h1v1h-1zM1210 502h1v1h-1zM1198 503h1v1h-1zM1210 503h1v1h-1zM1198 504h1v1h-1zM1210 504h1v1h-1zM1198 505h1v1h-1zM1210 505h1v1h-1zM1198 506h1v1h-1zM1210 506h1v1h-1zM1198 507h1v1h-1zM1210 507h1v1h-1zM1198 508h1v1h-1zM1210 508h1v1h-1zM1198 509h1v1h-1zM1210 509h1v1h-1zM1198 510h1v1h-1zM1210 510h1v1h-1zM1198 511h1v1h-1zM1210 511h1v1h-1zM1198 512h13v1h-13z"/><path fill="#00005a" d="M9 437h9v1h-9zM9 438h9v1h-9z"/><path fill="#000" d="M9 439h1v1h-1zM17 439h1v1h-1zM19 439h1v1h-1zM9 440h1v1h-1zM17 440h1v1h-1zM19 440h2v1h-2zM9 441h1v1h-1zM17 441h1v1h-1zM19 441h1v1h-1zM21 441h1v1h-1zM9 442h1v1h-1zM13 442h7v1h-7zM22 442h1v1h-1zM9 443h1v1h-1zM13 443h1v1h-1zM23 443h1v1h-1zM9 444h5v1h-5zM24 444h1v1h-1zM13 445h1v1h-1zM23 445h1v1h-1zM13 446h7v1h-7zM22 446h1v1h-1zM19 447h1v1h-1zM21 447h1v1h-1zM19 448h2v1h-2zM19 449h1v1h-1z"/><path fill="#fff" d="M10 439h7v1h-7zM10 440h1v1h-1zM16 440h1v1h-1zM10 441h7v1h-7zM10 442h1v1h-1zM10 443h3v1h-3z"/><path fill="#7a86b0" d="M11 440h5v1h-5zM11 442h2v1h-2z"/><path fill="#34ecec" d="M20 441h1v1h-1zM20 442h2v1h-2zM14 443h9v1h-9zM14 444h10v1h-10zM14 445h9v1h-9zM20 446h2v1h-2zM20 447h1v1h-1z"/></svg>
<!-- tabs -->
<div class="abs" style="left:50.3px;top:800px;width:40.3px;height:19px;box-sizing:border-box;background:#f0f0f0;border:1px solid;border-color:transparent #696969 #696969 #fff;border-radius:0 0 3px 3px;box-shadow:inset -1px -1px 0 #a0a0a0;"></div><div class="t" style="letter-spacing:-0.590px;left:55.60px;top:803.01px;font-size:11.5px;">Map</div>

<div class="abs" style="left:91.6px;top:800px;width:40.4px;height:19px;box-sizing:border-box;background:#f0f0f0;border:1px solid;border-color:transparent #696969 #696969 #fff;border-radius:0 0 3px 3px;box-shadow:inset -1px -1px 0 #a0a0a0;"></div><div class="t" style="letter-spacing:-0.549px;left:97.50px;top:803.01px;font-size:11.5px;">HEX</div>

<div class="abs" style="left:133.0px;top:800px;width:54.6px;height:19px;box-sizing:border-box;background:#f0f0f0;border:1px solid;border-color:transparent #696969 #696969 #fff;border-radius:0 0 3px 3px;box-shadow:inset -1px -1px 0 #a0a0a0;"></div><div class="t" style="letter-spacing:-0.417px;left:139.60px;top:803.01px;font-size:11.5px;">Structure</div>

<div class="abs" style="left:189.0px;top:800px;width:40.4px;height:19px;box-sizing:border-box;background:#f0f0f0;border:1px solid;border-color:transparent #696969 #696969 #fff;border-radius:0 0 3px 3px;box-shadow:inset -1px -1px 0 #a0a0a0;"></div><div class="t" style="letter-spacing:-0.567px;left:195.00px;top:803.01px;font-size:11.5px;">Status</div>

<div class="abs" style="left:230.6px;top:800px;width:60.4px;height:19px;box-sizing:border-box;background:#f0f0f0;border:1px solid;border-color:transparent #696969 #696969 #fff;border-radius:0 0 3px 3px;box-shadow:inset -1px -1px 0 #a0a0a0;"></div><div class="t" style="letter-spacing:-0.510px;left:236.40px;top:803.01px;font-size:11.5px;">Processes</div>

<div class="abs" style="left:7px;top:798px;width:43px;height:23px;box-sizing:border-box;background:#f0f0f0;border:1px solid;border-color:transparent #696969 #696969 #fff;border-radius:0 0 3px 3px;box-shadow:inset -1px -1px 0 #a0a0a0;"></div>
<div class="abs" style="left:8px;top:802px;width:41px;height:17px;box-sizing:border-box;border:1px dotted #000;overflow:hidden;"></div>
<div class="abs" style="left:9px;top:803px;width:39px;height:15px;overflow:hidden;"><div class="t" style="letter-spacing:-0.396px;left:4.60px;top:1.61px;font-size:11.5px;">Log</div>
</div>
<div class="abs" style="left:5px;top:821px;width:1405px;height:9px;box-sizing:border-box;border:1px solid;border-color:#a0a0a0 #fff #fff #a0a0a0;"></div>
<div class="abs" style="left:1px;top:49px;width:1413px;height:785px;box-sizing:border-box;border:1px solid #f9fdfd;border-top:none;pointer-events:none;"></div>
<div class="abs" style="left:0;top:0;width:1415px;height:835px;box-sizing:border-box;border:1px solid #19485b;border-top-color:#1f343c;pointer-events:none;"></div>
</div>
</body></html>
